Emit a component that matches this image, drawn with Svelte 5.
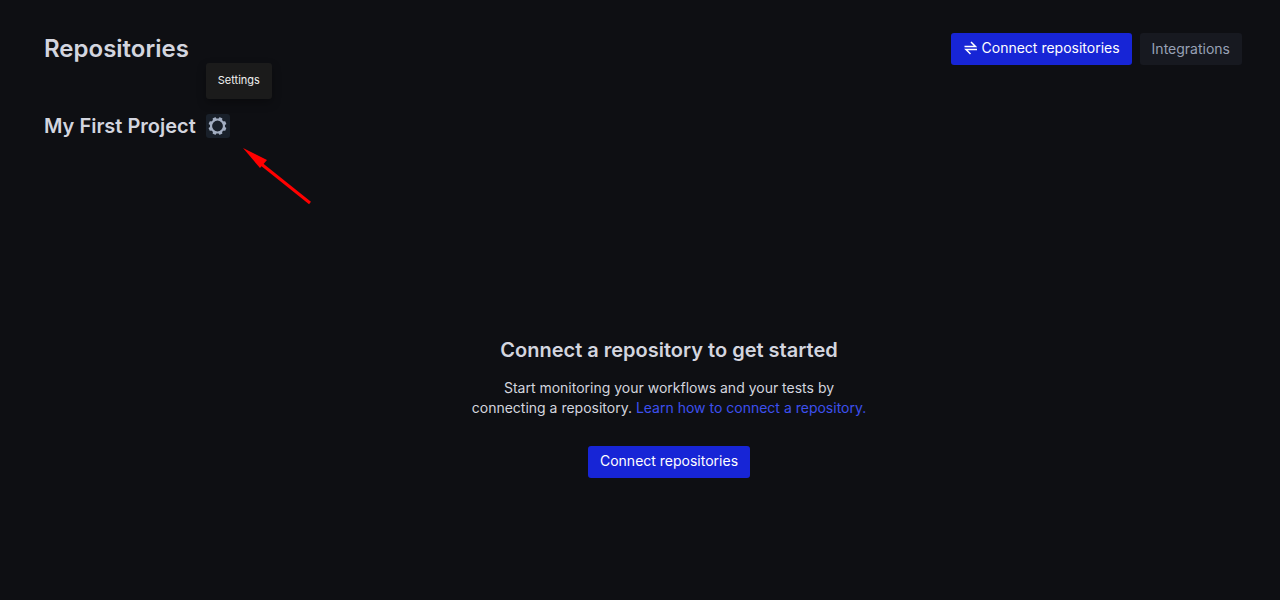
<script>
  const teeth = [22.5, 67.5, 112.5, 157.5, 202.5, 247.5, 292.5, 337.5];
</script>

<main class="page">
  <header class="topbar">
    <h1>Repositories</h1>
    <div class="actions">
      <button class="btn primary" type="button">
        <svg class="swap" viewBox="0 0 14 16" aria-hidden="true">
          <path d="M1.5 6.5H12.5L8 2M14 9.5H3L7.5 14" />
        </svg>
        Connect repositories
      </button>
      <button class="btn secondary" type="button">Integrations</button>
    </div>
  </header>

  <section class="project">
    <h2>My First Project</h2>
    <div class="settings">
      <button class="gear" type="button" aria-label="Project settings" aria-describedby="settings-tip">
        <svg viewBox="0 0 20 20" aria-hidden="true">
          <circle cx="9.5" cy="10" r="6.5" fill="none" stroke="#a3aec2" stroke-width="2.2" />
          {#each teeth as angle}
            <path d="M7.4 4.2L7.8 1.4Q7.9 1 8.3 1H10.7Q11.1 1 11.2 1.4L11.6 4.2Z" fill="#a3aec2" transform="rotate({angle} 9.5 10)" />
          {/each}
        </svg>
      </button>
      <span class="tooltip" role="tooltip" id="settings-tip">Settings</span>
      <svg class="pointer" viewBox="0 0 70 58" aria-hidden="true">
        <path d="M17 15L67 55" stroke="#ff0000" stroke-width="3" />
        <path d="M0 0L24 12L17 20Z" fill="#ff0000" />
      </svg>
    </div>
  </section>

  <section class="empty">
    <h2>Connect a repository to get started</h2>
    <p>
      Start monitoring your workflows and your tests by connecting a repository.
      <a href="#learn">Learn how to connect a repository.</a>
    </p>
    <button class="btn primary" type="button">Connect repositories</button>
  </section>
</main>

<style>
  :global(body) {
    background: #0e0f13;
  }

  .page {
    box-sizing: border-box;
    min-height: 100vh;
    padding: 32px 38px 40px 44px;
    background: #0e0f13;
    color: #d3d5df;
    font-family: Inter, sans-serif;
  }

  h1,
  h2,
  p {
    margin: 0;
  }

  h1 {
    font-size: 24px;
    line-height: 32px;
    font-weight: 600;
  }

  h2 {
    font-size: 20px;
    line-height: 28px;
    font-weight: 600;
  }

  .topbar {
    display: flex;
    align-items: center;
    justify-content: space-between;
  }

  .actions {
    display: flex;
    gap: 8px;
    padding-top: 1px;
  }

  .btn {
    display: inline-flex;
    align-items: center;
    gap: 5px;
    height: 32px;
    padding: 0 12px;
    border: 0;
    border-radius: 3px;
    font: 400 14px/20px Inter, sans-serif;
    cursor: pointer;
  }

  .primary {
    padding-bottom: 2px;
    background: #1725d6;
    color: #fff;
  }

  .secondary {
    background: #171920;
    color: #98a1b5;
  }

  .swap {
    width: 14px;
    height: 16px;
    fill: none;
    stroke: #fff;
    stroke-width: 1.5;
  }

  .project {
    display: flex;
    align-items: center;
    gap: 10px;
    margin-top: 47px;
  }

  .settings {
    position: relative;
    display: flex;
  }

  .gear {
    display: grid;
    place-items: center;
    width: 24px;
    height: 24px;
    padding: 0;
    border: 0;
    border-radius: 3px;
    background: #19202a;
    cursor: pointer;
  }

  .gear svg {
    width: 20px;
    height: 20px;
  }

  .tooltip {
    position: absolute;
    bottom: 39px;
    left: 0;
    padding: 7px 12px 9px;
    border-radius: 3px;
    background: #1b1b1b;
    box-shadow: 0 4px 10px rgb(0 0 0 / 30%);
    color: #f0f0f0;
    font-size: 11px;
    line-height: 20px;
  }

  .pointer {
    position: absolute;
    top: 34px;
    left: 37px;
    width: 70px;
    height: 58px;
    pointer-events: none;
  }

  .empty {
    display: flex;
    flex-direction: column;
    align-items: center;
    margin-top: 196px;
    padding-left: 52px;
    text-align: center;
  }

  .empty p {
    max-width: 400px;
    margin: 14px 0 28px;
    font-size: 14px;
    line-height: 20px;
  }

  a {
    color: #3d50ee;
    text-decoration: none;
  }
</style>
